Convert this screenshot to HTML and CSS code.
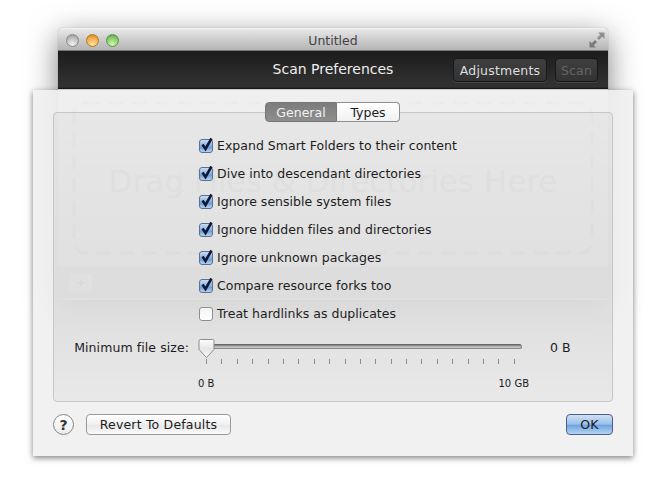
FILE: index.html
```html
<!DOCTYPE html>
<html lang="en">
<head>
<meta charset="utf-8">
<title>Scan Preferences</title>
<link rel="stylesheet" href="styles.css">
</head>
<body>
<div class="desktop">
  <section class="window">
    <header class="titlebar">
      <div class="lights"><i class="light close"></i><i class="light min"></i><i class="light zoom"></i></div>
      <span class="title">Untitled</span>
      <svg class="fullscreen" width="16" height="16" viewBox="0 0 16 16"><path d="M15.500 .5H9L11.200 2.700L8 5.900L10 7.900L13.200 4.700L15.500 7Z" fill="#8f8f8f"/><path d="M.5 15.500H7L4.800 13.300L8 10.100L6 8.100L2.800 11.300L.5 9Z" fill="#7b7b7b"/></svg>
    </header>
    <div class="toolbar">
      <h1 class="toolbar-title">Scan Preferences</h1>
      <div class="toolbar-buttons">
        <span class="dark-btn">Adjustments</span>
        <span class="dark-btn off">Scan</span>
      </div>
    </div>
    <div class="window-body">
      <div class="dropzone">
        <svg class="dashes" width="526" height="156" viewBox="0 0 526 156"><rect x="3" y="2" width="518" height="150" rx="12" fill="none" stroke="#bababa" stroke-width="3" stroke-dasharray="14 9"/></svg>
        <span class="drop-text">Drag Files &amp; Directories Here</span>
      </div>
      <div class="addbar"><span class="addbtn">+</span></div>
    </div>
  </section>

  <section class="sheet">
    <div class="panel">
      <div class="tabs"><span class="tab on">General</span><span class="tab">Types</span></div>
      <ul class="options">
        <li class="option"><svg class="box" width="18" height="17" viewBox="0 0 18 17"><use href="#boxon"/></svg>Expand Smart Folders to their content</li>
        <li class="option"><svg class="box" width="18" height="17" viewBox="0 0 18 17"><use href="#boxon"/></svg>Dive into descendant directories</li>
        <li class="option"><svg class="box" width="18" height="17" viewBox="0 0 18 17"><use href="#boxon"/></svg>Ignore sensible system files</li>
        <li class="option"><svg class="box" width="18" height="17" viewBox="0 0 18 17"><use href="#boxon"/></svg>Ignore hidden files and directories</li>
        <li class="option"><svg class="box" width="18" height="17" viewBox="0 0 18 17"><use href="#boxon"/></svg>Ignore unknown packages</li>
        <li class="option"><svg class="box" width="18" height="17" viewBox="0 0 18 17"><use href="#boxon"/></svg>Compare resource forks too</li>
        <li class="option"><svg class="box" width="18" height="17" viewBox="0 0 18 17"><use href="#boxoff"/></svg>Treat hardlinks as duplicates</li>
      </ul>
      <div class="size">
        <span class="size-label">Minimum file size:</span>
        <div class="slider">
          <div class="track"></div>
          <svg class="thumb" width="17" height="20" viewBox="0 0 17 20"><path d="M2.500 .5H14.500Q16 .5 16 2V10.500L8.500 18.500L1 10.500V2Q1 .5 2.500 .5Z" fill="url(#thumbfill)" stroke="#8d8d8d"/></svg>
          <div class="ticks"><i></i><i></i><i></i><i></i><i></i><i></i><i></i><i></i><i></i><i></i><i></i><i></i><i></i><i></i><i></i><i></i><i></i><i></i><i></i><i></i><i></i></div>
          <div class="scale"><span>0 B</span><span>10 GB</span></div>
        </div>
        <span class="size-value">0 B</span>
      </div>
    </div>
    <footer class="footer">
      <span class="help">?</span>
      <span class="btn">Revert To Defaults</span>
      <span class="btn ok">OK</span>
    </footer>
  </section>
</div>
<svg class="defs" width="0" height="0" aria-hidden="true">
  <defs>
    <linearGradient id="thumbfill" x1="0" y1="0" x2="0" y2="1"><stop offset="0" stop-color="#fdfdfd"/><stop offset=".5" stop-color="#e6e6e6"/><stop offset="1" stop-color="#f8f8f8"/></linearGradient>
    <linearGradient id="boxblue" x1="0" y1="0" x2="0" y2="1"><stop offset="0" stop-color="#cfe0f3"/><stop offset=".45" stop-color="#8fb6e2"/><stop offset=".6" stop-color="#6e9fd8"/><stop offset="1" stop-color="#bcd9f4"/></linearGradient>
    <linearGradient id="boxwhite" x1="0" y1="0" x2="0" y2="1"><stop offset="0" stop-color="#f4f4f4"/><stop offset="1" stop-color="#ffffff"/></linearGradient>
    <g id="boxon"><rect x="1.500" y="2.500" width="13" height="13" rx="2.500" fill="url(#boxblue)" stroke="#5f6f90"/><path d="M4.500 7.500L7.500 12L13.500 1.500" fill="none" stroke="#0e1a38" stroke-width="2.600"/></g>
    <g id="boxoff"><rect x="1.500" y="2.500" width="13" height="13" rx="2.500" fill="url(#boxwhite)" stroke="#8f8f8f"/></g>
  </defs>
</svg>
</body>
</html>
```
FILE: styles.css
```css
* { box-sizing: border-box; }
html, body { margin: 0; padding: 0; }
body {
  width: 670px;
  height: 486px;
  overflow: hidden;
  background: #fff;
  font-family: "DejaVu Sans", sans-serif;
  font-size: 12.5px;
  color: #1c1c1c;
}
.desktop { position: relative; width: 670px; height: 486px; overflow: hidden; }
.defs { position: absolute; }

.window {
  position: absolute;
  left: 58px;
  top: 28px;
  width: 550px;
  height: 272px;
  border-radius: 5px 5px 0 0;
  background: #e2e2e2;
  box-shadow: 0 8px 30px rgba(0, 0, 0, .5), 0 0 1px rgba(0, 0, 0, .5);
}
.titlebar {
  height: 23px;
  display: flex;
  align-items: center;
  justify-content: space-between;
  padding: 1px 3px 0 8px;
  border-radius: 5px 5px 0 0;
  background: linear-gradient(#e8e8e8, #c8c8c8 60%, #b4b4b4);
  border-top: 1px solid #f4f4f4;
  border-bottom: 1px solid #777;
  position: relative;
}
.lights { display: flex; gap: 7px; }
.light {
  width: 13px;
  height: 13px;
  border-radius: 50%;
  border: 1px solid #8a8a8a;
  background: radial-gradient(circle at 50% 85%, #f4f4f4, #c2c2c2 55%, #8e8e8e);
}
.light.min { border-color: #b07b2c; background: radial-gradient(circle at 50% 85%, #ffe3a0, #f6b04c 55%, #c07e26); }
.light.zoom { border-color: #5d9450; background: radial-gradient(circle at 50% 85%, #d4f6b4, #8cd06e 55%, #549c44); }
.title { position: absolute; left: 0; right: 0; padding-top: 1px; text-align: center; color: #444; font-size: 12.500px; }
.fullscreen { position: relative; }

.toolbar {
  height: 38px;
  display: flex;
  align-items: center;
  justify-content: flex-end;
  padding-right: 10px;
  position: relative;
  background: linear-gradient(#1c1c1c, #333 95%, #111);
}
.toolbar-title {
  position: absolute;
  left: 0;
  right: 0;
  top: 10px;
  margin: 0;
  text-align: center;
  font-size: 14px;
  font-weight: normal;
  color: #eee;
}
.toolbar-buttons { display: flex; gap: 8px; position: relative; }
.dark-btn {
  height: 24px;
  width: 94px;
  display: flex;
  align-items: center;
  justify-content: center;
  font-size: 12.500px;
  letter-spacing: .2px;
  color: #ddd;
  border: 1px solid #181818;
  border-radius: 4px;
  background: linear-gradient(#3f3f3f, #333);
  box-shadow: 0 1px 0 rgba(255, 255, 255, .1);
}
.dark-btn.off { color: #646464; width: 43px; }

.window-body { padding: 12px 14px 0; }
.dropzone { position: relative; height: 156px; display: flex; align-items: center; justify-content: center; }
.dashes { position: absolute; left: -1px; top: 0; }
.drop-text { font-size: 31px; color: #ababab; padding-top: 4px; }
.addbar { margin: 9px -14px 0; height: 32px; background: #c2c2c2; padding: 8px 12px; }
.addbtn { display: flex; width: 22px; height: 17px; align-items: center; justify-content: center; background: #e8e8e8; color: #999; font-weight: bold; }

.sheet {
  position: absolute;
  left: 33px;
  top: 90px;
  width: 600px;
  height: 366px;
  padding: 22px 20px 0;
  background: rgba(240, 240, 240, .91);
  box-shadow: 0 2px 6px rgba(0, 0, 0, .5);
}
.panel {
  height: 290px;
  border: 1px solid #c6c6c6;
  border-radius: 4px;
  background: linear-gradient(rgba(0, 0, 0, .035), rgba(0, 0, 0, .07) 72%, rgba(0, 0, 0, .035));
}
.tabs { display: flex; justify-content: center; margin: -11px 0 0 -1px; }
.tab {
  width: 63px;
  height: 20px;
  display: flex;
  align-items: center;
  justify-content: center;
  background: linear-gradient(#fff, #f1f1f1);
  border: 1px solid #8e8e8e;
  border-left: 0;
  border-radius: 0 4px 4px 0;
}
.tab.on {
  width: 72px;
  color: #f2f2f2;
  background: linear-gradient(#7c7c7c, #8e8e8e);
  border: 1px solid #777;
  border-radius: 4px 0 0 4px;
}

.options {
  list-style: none;
  margin: 15px 0 0;
  padding: 0 0 0 144px;
  display: flex;
  flex-direction: column;
  gap: 11px;
}
.option { height: 17px; display: flex; align-items: center; gap: 1px; white-space: nowrap; letter-spacing: .02px; }
.box { flex: none; }

.size { display: grid; grid-template-columns: 135px 331px auto; column-gap: 9px; margin-top: 17px; }
.size-label { text-align: right; padding-top: 1px; white-space: nowrap; letter-spacing: .08px; }
.size-value { margin-left: 12px; padding-top: 1px; }
.slider { position: relative; padding-top: 5px; }
.track {
  width: 322px;
  margin-left: 2px;
  height: 5px;
  border-radius: 3px;
  background: linear-gradient(#777, #a8a8a8 40%, #d2d2d2);
  border: 1px solid #8a8a8a;
  border-top-color: #666;
}
.thumb { position: absolute; left: 0; top: 0; }
.ticks { display: flex; justify-content: space-between; width: 309px; margin: 10px 0 0 8px; }
.ticks i { width: 1px; height: 5px; background: #8c8c8c; }
.scale { display: flex; justify-content: space-between; margin-top: 14px; font-size: 10px; }

.footer { display: flex; align-items: center; gap: 12px; margin-top: 12px; height: 21px; }
.help {
  width: 21px;
  height: 21px;
  display: flex;
  align-items: center;
  justify-content: center;
  border-radius: 50%;
  border: 1px solid #858585;
  background: linear-gradient(#fff, #ececec);
  font-weight: bold;
  font-size: 14px;
  color: #333;
}
.btn {
  height: 21px;
  width: 145px;
  display: flex;
  align-items: center;
  justify-content: center;
  border: 1px solid #9a9a9a;
  border-radius: 4px;
  letter-spacing: .18px;
  background: linear-gradient(#fff, #f0f0f0 50%, #e8e8e8 55%, #fafafa);
}
.btn.ok {
  width: 47px;
  margin-left: auto;
  border-color: #4d5f8e;
  background: linear-gradient(#d0e0f4, #9cc0ea 48%, #6ea4e0 54%, #b4d4f4);
}
```
